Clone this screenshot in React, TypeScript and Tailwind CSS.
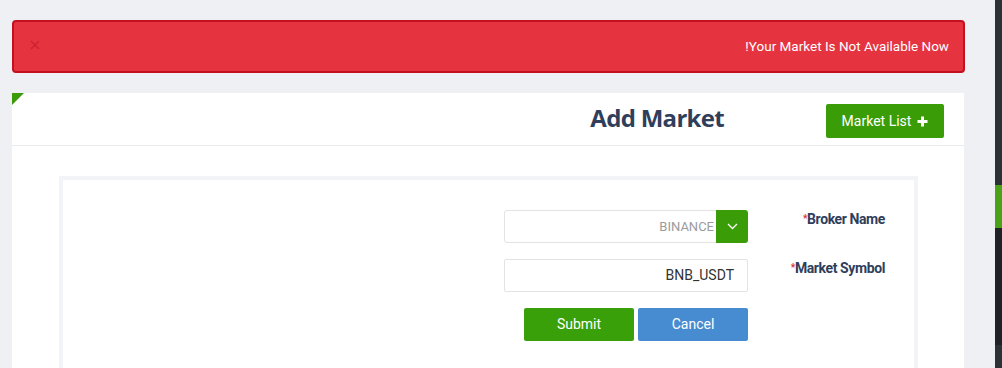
import React from "react";

export default function App() {
  return (
    <div className="flex h-[368px] w-[1002px] overflow-hidden bg-[#eef0f4]" style={{ fontFamily: "Roboto, 'Liberation Sans', sans-serif" }}>
      <div className="flex-1 pl-[12px] pr-[30px] pt-[20px]">
        {/* Alert */}
        <div className="flex h-[53px] items-center justify-between rounded-[4px] border-2 border-[#c3111f] bg-[#e5343f] pl-[16px] pr-[14px]">
          <svg width="10" height="10" viewBox="0 0 10 10" className="mt-[-3px]">
            <path d="M1 1 L9 9 M9 1 L1 9" stroke="#cf2232" strokeWidth="1.6" />
          </svg>
          <span className="text-[13.5px] text-white">!Your Market Is Not Available Now</span>
        </div>

        {/* Card */}
        <div className="relative mt-[20px] h-[300px] w-[952px] bg-white">
          <div className="absolute left-0 top-0 h-0 w-0 border-r-[12px] border-t-[12px] border-r-transparent border-t-[#3b9b0a]" />
          <div className="flex h-[53px] items-start justify-end border-b border-[#e9eaee] pr-[20px] pt-[11px]">
            <h1 className="mr-[102px] mt-[-2px] text-[24px] font-bold leading-[32px] tracking-[-0.7px] text-[#2f3e5b]" style={{ fontFamily: "'Open Sans', sans-serif" }}>
              Add Market
            </h1>
            <button className="flex h-[34px] w-[118px] items-center justify-center gap-[6px] rounded-[2px] bg-[#3a9d08] text-[14px] text-white">
              Market List
              <svg width="11" height="11" viewBox="0 0 11 11">
                <path d="M5.5 0.5 V10.5 M0.5 5.5 H10.5" stroke="white" strokeWidth="3" />
              </svg>
            </button>
          </div>

          <div className="ml-[47px] mr-[46px] mt-[30px] h-[250px] border-4 border-[#f3f4f8] pt-[30px]">
            <div className="flex flex-col gap-[16px]">
              <div className="flex justify-end">
                <div className="flex h-[33px] w-[244px] items-stretch rounded-[3px] border border-[#e3e3e3]">
                  <div className="flex flex-1 items-center justify-end pr-[2px] text-[13px] text-[#9b9b9b]">BINANCE</div>
                  <div className="-my-px -mr-px flex w-[32px] items-center justify-center rounded-r-[3px] bg-[#3a9d08]">
                    <svg width="11" height="7" viewBox="0 0 11 7">
                      <path d="M1 1 L5.5 5.5 L10 1" stroke="white" strokeWidth="1.3" fill="none" />
                    </svg>
                  </div>
                </div>
                <div className="mt-[-3px] w-[166px] pr-[29px] text-right">
                  <span className="text-[14px] font-bold leading-[16px] tracking-[-0.4px] text-[#2f3e5b]">
                    <span className="relative top-[-2px] text-[10px] text-[#d9303e]">*</span>Broker Name
                  </span>
                </div>
              </div>
              <div className="flex justify-end">
                <div className="flex h-[33px] w-[244px] items-center justify-end rounded-[2px] border border-[#e3e3e3] pr-[13px] text-[14px] text-[#333]">
                  BNB_USDT
                </div>
                <div className="mt-[-3px] w-[166px] pr-[29px] text-right">
                  <span className="text-[14px] font-bold leading-[16px] tracking-[-0.4px] text-[#2f3e5b]">
                    <span className="relative top-[-2px] text-[10px] text-[#d9303e]">*</span>Market Symbol
                  </span>
                </div>
              </div>
              <div className="flex justify-end">
                <div className="flex gap-[4px]">
                  <button className="h-[33px] w-[110px] rounded-[2px] bg-[#3aa00a] text-[14px] text-white">Submit</button>
                  <button className="h-[33px] w-[110px] rounded-[2px] bg-[#478cd0] text-[14px] text-white">Cancel</button>
                </div>
                <div className="w-[166px]" />
              </div>
            </div>
          </div>
        </div>
      </div>
      {/* Right strip */}
      <div className="flex w-[7px] flex-col">
        <div className="h-[185px] bg-[#2b3136]" />
        <div className="h-[43px] bg-[#4aa316]" />
        <div className="h-[117px] bg-[#1f2226]" />
        <div className="flex-1 bg-[#2d3236]" />
      </div>
    </div>
  );
}
